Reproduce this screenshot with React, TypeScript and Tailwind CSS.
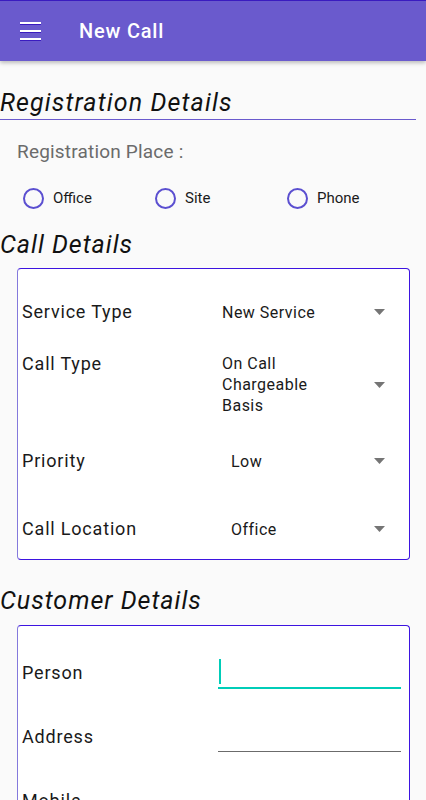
import React from 'react'

const FONT = { fontFamily: 'Roboto, "Noto Sans", sans-serif' }

function Caret() {
  return (
    <svg width="11" height="6" viewBox="0 0 11 6" className="flex-shrink-0">
      <path d="M0 0h11L5.5 6z" fill="#757575" />
    </svg>
  )
}

function Radio({ label }: { label: string }) {
  return (
    <div className="flex items-center gap-[9px]">
      <span className="w-[21px] h-[21px] rounded-full border-2 border-[#5b4fd0] box-border" />
      <span className="text-[15px] text-[#1a1a1a]">{label}</span>
    </div>
  )
}

function SelectRow({
  label,
  value,
  valueLeft,
  className,
  top,
}: {
  label: string
  value: React.ReactNode
  valueLeft: string
  className: string
  top?: boolean
}) {
  return (
    <div className={`flex ${top ? 'items-start' : 'items-center'} ${className}`}>
      <div className="w-[201px] pl-[4px] text-[18px] leading-[22px] tracking-[0.045em] text-[#1a1a1a]">{label}</div>
      <div className={`flex-1 self-stretch flex items-center ${valueLeft}`}>
        <div className="flex-1 text-[16px] leading-[21px] tracking-[0.03em] text-[#1a1a1a]">{value}</div>
        <div className="pr-[24px]">
          <Caret />
        </div>
      </div>
    </div>
  )
}

export default function App() {
  return (
    <div className="min-h-[800px] bg-[#fafafa] overflow-hidden" style={FONT}>
      <header className="h-[61px] bg-[#6a5acd] border-t border-[#3a1bbf] flex items-center shadow-[0_2px_4px_rgba(0,0,0,0.25)] relative">
        <div className="ml-[20px] w-[21px] flex flex-col gap-[5px]">
          <span className="h-[2px] bg-white border-b border-[#3a1bbf] box-content" />
          <span className="h-[2px] bg-white border-b border-[#3a1bbf] box-content" />
          <span className="h-[2px] bg-white border-b border-[#3a1bbf] box-content" />
        </div>
        <h1 className="ml-[38px] text-[20px] font-medium tracking-[0.04em] text-white">New Call</h1>
      </header>

      <div className="mt-[26px] mr-[10px] border-b border-[#6a5acd] pb-[1px]">
        <h2 className="text-[25px] leading-[31px] italic tracking-[0.045em] text-[#111]">Registration Details</h2>
      </div>

      <p className="mt-[20px] pl-[17px] text-[19px] leading-[24px] tracking-[0.01em] text-[#6b6b6b]">Registration Place :</p>

      <div className="mt-[22px] h-[24px] flex items-center pl-[23px]">
        <div className="w-[132px]">
          <Radio label="Office" />
        </div>
        <div className="w-[132px]">
          <Radio label="Site" />
        </div>
        <Radio label="Phone" />
      </div>

      <h2 className="mt-[20px] text-[25px] leading-[30px] italic tracking-[0.04em] text-[#111]">Call Details</h2>

      <section className="mt-[8px] ml-[17px] mr-[16px] bg-white border-[1.5px] border-[#3d14e0] border-l-[#8479dc] rounded-[4px] pt-[19px] pb-[6px]">
        <SelectRow label="Service Type" value="New Service" valueLeft="pl-[3px]" className="h-[48px]" />
        <SelectRow
          top
          label="Call Type"
          value={
            <>
              On Call
              <br />
              Chargeable
              <br />
              Basis
            </>
          }
          valueLeft="pl-[3px]"
          className="mt-[17px] h-[63px]"
        />
        <SelectRow label="Priority" value="Low" valueLeft="pl-[12px]" className="mt-[21px] h-[48px]" />
        <SelectRow label="Call Location" value="Office" valueLeft="pl-[12px]" className="mt-[20px] h-[48px]" />
      </section>

      <h2 className="mt-[26px] text-[25px] leading-[30px] italic tracking-[0.04em] text-[#111]">Customer Details</h2>

      <section className="mt-[9px] ml-[17px] mr-[16px] bg-white border-[1.5px] border-[#3d14e0] border-l-[#8479dc] rounded-t-[4px] border-b-0 pt-[28px] h-[200px]">
        <div className="flex items-end h-[35px]">
          <div className="w-[200px] pl-[4px] text-[18px] leading-[24px] tracking-[0.045em] text-[#1a1a1a] pb-[4px]">Person</div>
          <div className="flex-1 mr-[8px] h-[31px] border-b-2 border-[#00cdb8] relative">
            <span className="absolute left-[1px] top-[1px] w-[2px] h-[25px] bg-[#00cdb8]" />
          </div>
        </div>
        <div className="flex items-end h-[35px] mt-[28px]">
          <div className="w-[200px] pl-[4px] text-[18px] leading-[24px] tracking-[0.045em] text-[#1a1a1a] pb-[3px]">Address</div>
          <div className="flex-1 mr-[8px] h-[30px] border-b border-[#6b6b6b]" />
        </div>
        <div className="mt-[37px] pl-[4px] text-[18px] leading-[24px] tracking-[0.045em] text-[#1a1a1a]">Mobile</div>
      </section>
    </div>
  )
}
